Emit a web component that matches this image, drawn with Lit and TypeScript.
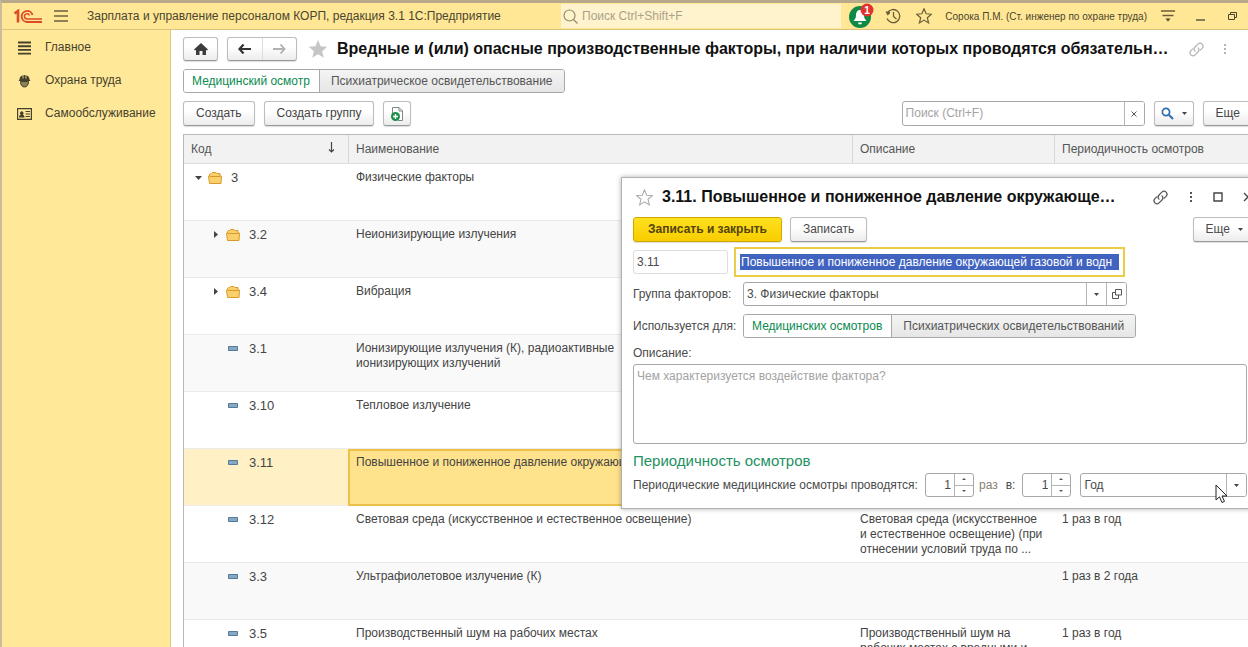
import { LitElement, html, svg, css, nothing } from "lit";
import { customElement, state } from "lit/decorators.js";
import { classMap } from "lit/directives/class-map.js";

interface Factor {
  code: string;
  name: string;
  kind: "open" | "folder" | "item";
  note?: string;
  period?: string;
}

const FACTORS: Factor[] = [
  { code: "3", name: "Физические факторы", kind: "open" },
  { code: "3.2", name: "Неионизирующие излучения", kind: "folder" },
  { code: "3.4", name: "Вибрация", kind: "folder" },
  { code: "3.1", name: "Ионизирующие излучения (К), радиоактивные\nионизирующих излучений", kind: "item" },
  { code: "3.10", name: "Тепловое излучение", kind: "item" },
  { code: "3.11", name: "Повышенное и пониженное давление окружающей", kind: "item" },
  {
    code: "3.12",
    name: "Световая среда (искусственное и естественное освещение)",
    kind: "item",
    note: "Световая среда (искусственное\nи естественное освещение) (при\nотнесении условий труда по ...",
    period: "1 раз в год",
  },
  { code: "3.3", name: "Ультрафиолетовое излучение (К)", kind: "item", period: "1 раз в 2 года" },
  {
    code: "3.5",
    name: "Производственный шум на рабочих местах",
    kind: "item",
    note: "Производственный шум на\nрабочих местах с вредными и",
    period: "1 раз в год",
  },
];

const linkIcon = svg`<svg width="17" height="17" viewBox="0 0 17 17" fill="none" stroke="currentColor" stroke-width="1.2" stroke-linecap="round">
  <path d="M7 10.2a3 3 0 0 1 0-4.2l2.9-2.9a3 3 0 0 1 4.2 0a3 3 0 0 1 0 4.2l-1.8 1.8"/>
  <path d="M10 6.8a3 3 0 0 1 0 4.2l-2.9 2.9a3 3 0 0 1-4.2 0a3 3 0 0 1 0-4.2l1.8-1.8"/></svg>`;
const dotsIcon = svg`<svg width="4" height="12" viewBox="0 0 4 12" fill="currentColor"><path d="M1 1h2v2H1zM1 5h2v2H1zM1 9h2v2H1z"/></svg>`;
const caret = svg`<svg width="5" height="3" viewBox="0 0 5 3"><path d="M0 0h5L2.5 3z" fill="#444"/></svg>`;
const starPath = "M8 .8l2.100 5 5.300.4-4.100 3.500 1.300 5.200L8 12.100l-4.600 2.800 1.300-5.200L.6 6.200l5.300-.4z";

const base = css`
  * { box-sizing: border-box; }
  button, input, select, textarea {
    font: inherit; color: inherit; margin: 0; border-radius: 0; outline: none;
  }
  svg { display: block; flex: none; }
  .btn, .tabs {
    border: 1px solid #bdbdbd; border-bottom-color: #999; border-radius: 3px;
    background: linear-gradient(#fff 40%, #ececec);
  }
  .btn {
    display: flex; align-items: center; justify-content: center; gap: 8px;
    height: 25px; padding: 0 12px; white-space: nowrap; flex: none;
    box-shadow: 0 1px 1px #ddd;
  }
  .icon { border: 0; background: none; padding: 0; display: flex; flex: none; }
  .tabs { display: flex; width: max-content; height: 24px; overflow: hidden; border-color: #a8a8a8; }
  .tabs button {
    border: 0; background: linear-gradient(#f4f4f4, #e6e6e6); padding: 0 11px; white-space: nowrap; color: #555;
  }
  .tabs button + button { border-left: 1px solid #a8a8a8; }
  .tabs .on { background: #fff; color: #0a8a50; padding: 0 9px 0 8px; }
  .box {
    display: flex; height: 24px; border: 1px solid #a8a8a8; border-radius: 3px; background: #fff; overflow: hidden;
  }
  .box input, .box select {
    border: 0; background: none; padding: 0 3px; min-width: 0; flex: 1; appearance: none;
  }
  .box .cell {
    border: 0; border-left: 1px solid #b4b4b4; background: #fff; width: 20px; padding: 0;
    display: flex; align-items: center; justify-content: center; flex: none;
  }
  ::placeholder { color: #a3a3a3; opacity: 1; }
  h1, h2 {
    font-size: 16px; line-height: 22px; font-weight: 700; color: #111;
    flex: 1; min-width: 0; white-space: nowrap;
  }
`;

@customElement("factor-dialog")
export class FactorDialog extends LitElement {
  @state() private times = 1;
  @state() private every = 1;

  static styles = [
    base,
    css`
      :host {
        display: block; background: #fff; border: 1px solid #b0b0b0;
        box-shadow: 0 0 5px rgba(0, 0, 0, 0.3); padding: 0 10px 11px 11px; color: #4a4a4a;
      }
      .head { display: flex; align-items: center; height: 38px; padding-left: 3px; }
      h2 { margin: 0 0 0 9px; }
      .tools { display: flex; align-items: center; color: #555; gap: 20px; margin: 0 -6px 0 12px; flex: none; }
      .row { display: flex; align-items: center; margin-bottom: 8px; }
      .actions { margin: 1px 0 5px; gap: 8px; }
      .primary {
        font-weight: 700; background: linear-gradient(#ffe11f, #f8cd00); border-color: #d0a800; color: #54430a;
        padding: 0 14px;
      }
      .more { margin-left: auto; margin-right: -9px; }
      .names { margin-bottom: 5px; }
      .code { width: 95px; margin-right: 6px; border-color: #ddd; }
      .name {
        border: 2px solid #eccb45; background: #fff; height: 30px; width: 391px; padding: 5px 4px; display: flex;
      }
      .name input {
        border: 0; padding: 0 0 0 1px; background: #4163c0; color: #fff; width: 100%; height: 16px;
      }
      .lab { width: 110px; white-space: nowrap; flex: none; }
      .group { width: 384px; }
      .desc { display: block; line-height: 15px; margin-bottom: 3px; }
      textarea {
        display: block; width: 100%; height: 80px; resize: none; border: 1px solid #a8a8a8; border-radius: 3px;
        padding: 4px 3px; line-height: 15px;
      }
      h3 { margin: 8px 0 3px; font-size: 15px; line-height: 18px; font-weight: 400; color: #23915f; }
      .last { margin: 0; white-space: nowrap; }
      .spin { width: 49px; flex: none; }
      .spin input { text-align: right; }
      .steps { display: flex; flex-direction: column; width: 19px; border-left: 1px solid #b4b4b4; flex: none; }
      .steps button {
        flex: 1; border: 0; padding: 0; background: none; display: flex; align-items: center; justify-content: center;
      }
      .steps button + button { border-top: 1px solid #b4b4b4; }
      .plabel { width: 292px; flex: none; }
      .times { color: #85826f; padding: 0 8px 0 5px; }
      .in { padding-right: 7px; }
      .unit { flex: 1; margin-left: 9px; }
    `,
  ];

  private spinner(id: string, value: number, set: (n: number) => void) {
    return html`<span class="box spin">
      <input id=${id} inputmode="numeric" .value=${String(value)} @change=${(e: Event) => set(Number((e.target as HTMLInputElement).value) || 1)} />
      <span class="steps">
        <button aria-label="Увеличить" @click=${() => set(value + 1)}><svg width="4" height="2" viewBox="0 0 4 2"><path d="M0 2h4L2 0z" fill="#555" /></svg></button>
        <button aria-label="Уменьшить" @click=${() => set(Math.max(1, value - 1))}><svg width="4" height="2" viewBox="0 0 4 2"><path d="M0 0h4L2 2z" fill="#555" /></svg></button>
      </span>
    </span>`;
  }

  render() {
    return html`
      <div class="head">
        <button class="icon" aria-label="В избранное">
          <svg width="17" height="17" viewBox="0 0 16 16"><path d=${starPath} fill="none" stroke="#aaa" /></svg>
        </button>
        <h2>3.11. Повышенное и пониженное давление окружающе…</h2>
        <div class="tools">
          <button class="icon" aria-label="Ссылка">${linkIcon}</button>
          <button class="icon" aria-label="Меню">${dotsIcon}</button>
          <button class="icon" aria-label="Развернуть"><svg width="10" height="10" viewBox="0 0 10 10"><path d="M1 1h8v8H1z" fill="none" stroke="#444" stroke-width="1.4" /></svg></button>
          <button class="icon" aria-label="Закрыть"><svg width="10" height="10" viewBox="0 0 10 10"><path d="M1 1l8 8M9 1l-8 8" stroke="#444" stroke-width="1.3" /></svg></button>
        </div>
      </div>
      <div class="row actions">
        <button class="btn primary">Записать и закрыть</button>
        <button class="btn">Записать</button>
        <button class="btn more">Еще ${caret}</button>
      </div>
      <div class="row names">
        <span class="box code"><input aria-label="Код" value="3.11" /></span>
        <span class="name"><input aria-label="Наименование" value="Повышенное и пониженное давление окружающей газовой и водн" /></span>
      </div>
      <div class="row">
        <label class="lab" for="group">Группа факторов:</label>
        <span class="box group">
          <input id="group" value="3. Физические факторы" />
          <button class="cell" aria-label="Выбрать">${caret}</button>
          <button class="cell" aria-label="Открыть">
            <svg width="10" height="10" viewBox="0 0 10 10" fill="none" stroke="#555"><path d="M3.5.5h6v5.5h-6zM3.5 3.5h-3v6h6V6" /></svg>
          </button>
        </span>
      </div>
      <div class="row">
        <span class="lab">Используется для:</span>
        <span class="tabs"><button class="on">Медицинских осмотров</button><button>Психиатрических освидетельствований</button></span>
      </div>
      <label class="desc" for="desc">Описание:</label>
      <textarea id="desc" placeholder="Чем характеризуется воздействие фактора?"></textarea>
      <h3>Периодичность осмотров</h3>
      <div class="row last">
        <label class="plabel" for="times">Периодические медицинские осмотры проводятся:</label>
        ${this.spinner("times", this.times, (n) => (this.times = n))}
        <span class="times">раз</span>
        <label class="in" for="every">в:</label>
        ${this.spinner("every", this.every, (n) => (this.every = n))}
        <span class="box unit">
          <select aria-label="Период"><option>Год</option></select>
          <span class="cell">${caret}</span>
        </span>
      </div>
    `;
  }
}

@customElement("app-root")
export class AppRoot extends LitElement {
  @state() private selected = "3.11";

  static styles = [
    base,
    css`
      :host {
        display: flex; flex-direction: column; height: 100vh; overflow: hidden; position: relative;
        font: 12px/15px "Liberation Sans", Arial, sans-serif; color: #444; background: #fff;
        border-top: 3px solid #b9a98c; border-left: 2px solid #c9bd9a;
      }
      header {
        display: flex; align-items: center; height: 27px; flex: none; background: #ffe795;
        border-bottom: 1px solid #d9c27c; padding: 0 9px 0 12px; color: #4a4530; white-space: nowrap;
      }
      .burger { margin: 0 19px 0 12px; }
      .app { flex: 0 0 474px; }
      .search {
        flex: 1; display: flex; align-items: center; gap: 4px; background: #fff3cd; height: 24px; padding-left: 2px;
        min-width: 0;
      }
      .search input { border: 0; background: none; padding: 0; flex: 1; min-width: 0; }
      .search ::placeholder { color: #a9a28a; }
      .sys { display: flex; align-items: center; margin-left: 8px; flex: none; }
      .bell { margin-right: 11px; }
      .badge-num { font-size: 10px; font-weight: 700; }
      .hist { margin-right: 15px; }
      .user { font-size: 10px; margin: 0 14px 0 13px; }
      .min { margin-right: 21px; }
      .body { display: flex; flex: 1; min-height: 0; }
      nav { width: 169px; flex: none; background: #ffe999; border-right: 1px solid #e3c97c; padding-top: 1px; }
      nav a {
        display: flex; align-items: center; gap: 13px; height: 33px; padding-left: 15px; color: #46412c;
        text-decoration: none;
      }
      main { flex: 1; min-width: 0; margin-right: -18px; padding: 7px 0 0 12px; display: flex; flex-direction: column; gap: 8px; }
      .title { display: flex; align-items: center; height: 24px; flex: none; }
      .title .btn { height: 24px; }
      .home { width: 35px; padding: 0; margin-right: 9px; }
      .nav { padding: 0; gap: 0; width: 70px; margin-right: 11px; }
      .nav button {
        flex: 1; height: 100%; border: 0; background: none; padding: 0; display: flex; align-items: center;
        justify-content: center;
      }
      .nav button + button { border-left: 1px solid #ddd; }
      h1 { margin: 0 10px 0 9px; }
      .pale { color: #b5b5b5; display: flex; align-items: center; gap: 18px; margin-right: 39px; flex: none; }
      .bar { display: flex; gap: 9px; flex: none; }
      .plus { width: 28px; padding: 0; }
      .find { width: 243px; height: 25px; margin-left: auto; }
      .lens { width: 40px; padding: 0; }
      .grid { border: 1px solid #b8b8b8; border-right: 0; flex: 1; min-height: 0; overflow: hidden; }
      table { border-collapse: separate; border-spacing: 0; table-layout: fixed; width: 100%; }
      .c-code { width: 164px; }
      .c-name { width: 504px; }
      .c-note { width: 202px; }
      th {
        text-align: left; font-weight: 400; height: 29px; padding: 0 7px; background: #f2f2f2; color: #555;
        border-bottom: 1px solid #ddd;
      }
      th + th { border-left: 1px solid #d8d8d8; }
      .sort { display: flex; justify-content: space-between; padding-right: 6px; }
      td {
        height: 57px; padding: 6px 7px 5px 8px; vertical-align: top; white-space: pre-line;
        border-bottom: 1px solid #ebebeb; overflow: hidden;
      }
      .clip { max-height: 45px; }
      tr:nth-child(even) td { background: #f9f9f9; }
      tr.sel td { background: #fff0c6; }
      tr.sel .main-cell { background: #ffe28c; border: 2px solid #ecc04a; padding: 4px 6px 3px; }
      .code { display: flex; align-items: center; height: 15px; gap: 6px; padding-left: 2px; font-size: 13px; }
      .code.deep { padding-left: 20px; }
      .mark { width: 8px; height: 8px; display: flex; align-items: center; justify-content: center; }
      .pic { width: 14px; margin-right: 3px; display: flex; justify-content: center; }
      factor-dialog { position: absolute; left: 619px; top: 174px; right: -10px; }
      .cursor { position: absolute; left: 1213px; top: 481px; }
    `,
  ];

  private marker(f: Factor) {
    if (f.kind === "item") return nothing;
    return f.kind === "open"
      ? html`<svg width="7" height="4" viewBox="0 0 7 4"><path d="M0 0h7L3.5 4z" fill="#444" /></svg>`
      : html`<svg width="4" height="7" viewBox="0 0 4 7"><path d="M0 0v7L4 3.5z" fill="#444" /></svg>`;
  }

  private picture(f: Factor) {
    return f.kind === "item"
      ? html`<svg width="10" height="5" viewBox="0 0 10 5"><path d="M.5.5h9v4h-9z" fill="#86a8c2" stroke="#54799a" /></svg>`
      : html`<svg width="14" height="12" viewBox="0 0 14 12"><path d="M1.500 11.500l-1-7.500h1V2.500l1-1h1l1-1H8l1 1h3V4h1.500l-.5 7.500z" fill="#fad06c" stroke="#d99a2b" /><path d="M2 4.500h10" stroke="#d99a2b" /></svg>`;
  }

  render() {
    return html`
      <header>
        <svg width="28" height="15" viewBox="0 0 28 15" fill="none" stroke="#dd4a26">
          <path d="M.5 4.500L4 2v11.500" stroke-width="2.600" />
          <path d="M18.500 6A5.500 5.500 0 1 0 13 13h15" stroke-width="1.800" />
          <path d="M15.500 6.500A2.600 2.600 0 1 0 13 10h15" stroke-width="1.500" />
        </svg>
        <button class="icon burger" aria-label="Меню">
          <svg width="14" height="12" viewBox="0 0 14 12"><path d="M0 1h14M0 6h14M0 11h14" stroke="#6b6040" stroke-width="1.3" /></svg>
        </button>
        <span class="app">Зарплата и управление персоналом КОРП, редакция 3.1 1С:Предприятие</span>
        <label class="search">
          <svg width="15" height="15" viewBox="0 0 15 15" fill="none" stroke="#958b68" stroke-width="1.2"><circle cx="6.5" cy="6.5" r="5.5" /><path d="M10.5 10.5l4 4" /></svg>
          <input type="search" placeholder="Поиск Ctrl+Shift+F" />
        </label>
        <div class="sys">
          <button class="icon bell" aria-label="Оповещения">
            <svg width="25" height="26" viewBox="0 0 25 26">
              <circle cx="11" cy="14" r="11" fill="#0e8a46" />
              <path d="M11 7c-3 0-4 2.500-4 5.500S5.500 16.500 4.500 18h13c-1-1.500-2.500-2.500-2.500-5.500S14 7 11 7zM9 19.500h4a2 2 0 0 1-4 0z" fill="#fff" />
              <circle cx="18" cy="7" r="6.500" fill="#e0332f" />
              <text class="badge-num" x="18" y="11" text-anchor="middle" fill="#fff">1</text>
            </svg>
          </button>
          <button class="icon hist" aria-label="История">
            <svg width="16" height="16" viewBox="0 0 16 16" fill="none" stroke="#695e3c" stroke-width="1.3"><path d="M2.600 4.500A6.600 6.600 0 1 1 2 10.500M8.500 4v4.500l3 2.500" /><path d="M.5 3.500h4.500v2l-2.500 2z" fill="#695e3c" stroke="none" /></svg>
          </button>
          <button class="icon" aria-label="Избранное">
            <svg width="16" height="16" viewBox="0 0 16 16"><path d=${starPath} fill="none" stroke="#695e3c" stroke-width="1.2" /></svg>
          </button>
          <span class="user">Сорока П.М. (Ст. инженер по охране труда)</span>
          <button class="icon min" aria-label="Настройки">
            <svg width="14" height="12" viewBox="0 0 14 12"><path d="M0 1h14M1.500 5.500h11" stroke="#695e3c" stroke-width="1.300" /><path d="M4.500 8.500h5L7 11.500z" fill="#4a4530" /></svg>
          </button>
          <button class="icon min" aria-label="Свернуть">
            <svg width="10" height="10" viewBox="0 0 10 10"><path d="M0 9h9" stroke="#4a4530" stroke-width="1.300" /></svg>
          </button>
          <button class="icon" aria-label="Восстановить">
            <svg width="12" height="10" viewBox="0 0 12 10" fill="none" stroke="#4a4530"><path d="M1.500 3.500h6v5h-6zM3.500 3.500v-2h6v5h-2" /></svg>
          </button>
        </div>
      </header>
      <div class="body">
        <nav>
          <a href="#main">
            <svg width="15" height="14" viewBox="0 0 15 14"><path d="M1 1.500h13M1 5.200h13M1 8.900h13M1 12.600h13" stroke="#46412c" stroke-width="1.900" /></svg>Главное
          </a>
          <a href="#safety">
            <svg width="15" height="14" viewBox="0 0 15 14"><path d="M2.500 5.500C2.500 2.500 4.500 1 7.500 1s5 1.500 5 4.500l1 1.500h-12z" fill="#46412c" /><path d="M6 1v3.500M9 1v3.500" stroke="#ffe999" stroke-width=".8" /><path d="M3.500 7.500c0 3.500 1.500 5.500 4 5.500s4-2 4-5.500z" fill="#8a8159" stroke="#46412c" /></svg>Охрана труда
          </a>
          <a href="#self">
            <svg width="15" height="12" viewBox="0 0 15 12"><path d="M.6.6h13.800v10.800H.6z" fill="none" stroke="#46412c" stroke-width="1.200" /><path d="M2 9.500c0-2 .8-2.500 1.800-2.800a1.800 1.800 0 1 1 1.900 0c1 .3 1.800.8 1.800 2.800z" fill="#46412c" /><path d="M8.500 3.500H13M8.500 6H13M8.500 8.500H13" stroke="#46412c" /></svg>Самообслуживание
          </a>
        </nav>
        <main>
          <div class="title">
            <button class="btn home" aria-label="Домой">
              <svg width="14" height="12" viewBox="0 0 14 12"><path d="M7 0l7 6.500-1 1L12 6.700V12H8.500V8h-3v4H2V6.700l-1 .8-1-1z" fill="#3c3c3c" /></svg>
            </button>
            <span class="btn nav">
              <button aria-label="Назад"><svg width="13" height="10" viewBox="0 0 13 10"><path d="M5.500.5L1.500 5l4 4.500M2 5h11" fill="none" stroke="#333" stroke-width="2.200" /></svg></button>
              <button aria-label="Вперед"><svg width="13" height="10" viewBox="0 0 13 10"><path d="M7.500.5l4 4.500-4 4.500M11 5H0" fill="none" stroke="#b0b0b0" stroke-width="1.800" /></svg></button>
            </span>
            <button class="icon" aria-label="В избранное"><svg width="20" height="20" viewBox="0 0 16 16"><path d=${starPath} fill="#c6c6c6" /></svg></button>
            <h1>Вредные и (или) опасные производственные факторы, при наличии которых проводятся обязательн…</h1>
            <div class="pale">
              <button class="icon" aria-label="Ссылка">${linkIcon}</button>
              <button class="icon" aria-label="Меню">${dotsIcon}</button>
            </div>
          </div>
          <div class="tabs"><button class="on">Медицинский осмотр</button><button>Психиатрическое освидетельствование</button></div>
          <div class="bar">
            <button class="btn">Создать</button>
            <button class="btn">Создать группу</button>
            <button class="btn plus" aria-label="Создать копированием">
              <svg width="14" height="16" viewBox="0 0 14 16"><path d="M2.500 8V1.500h6.500l3.500 3.500v9.500H8" fill="#fff" stroke="#7c8a86" /><path d="M9 1.500V5h3.500" fill="none" stroke="#7c8a86" /><circle cx="5.500" cy="10.500" r="4.500" fill="#1b8f4a" /><path d="M3 10.500h5M5.500 8v5" stroke="#fff" stroke-width="1.400" /></svg>
            </button>
            <span class="box find">
              <input aria-label="Поиск" placeholder="Поиск (Ctrl+F)" />
              <button class="cell" aria-label="Очистить"><svg width="6" height="6" viewBox="0 0 6 6"><path d="M.5.5l5 5M5.500.5l-5 5" stroke="#555" /></svg></button>
            </span>
            <button class="btn lens" aria-label="Найти">
              <svg width="13" height="13" viewBox="0 0 13 13" fill="none" stroke="#2f6fae"><circle cx="5" cy="5" r="3.600" stroke-width="1.700" /><path d="M8 8l4 4" stroke-width="2.200" /></svg>${caret}
            </button>
            <button class="btn">Еще ${caret}</button>
          </div>
          <div class="grid">
            <table>
              <colgroup><col class="c-code" /><col class="c-name" /><col class="c-note" /><col /></colgroup>
              <thead>
                <tr>
                  <th><span class="sort">Код <svg width="7" height="11" viewBox="0 0 7 11"><path d="M3.500 0v10M1 7.500l2.500 2.500L6 7.500" fill="none" stroke="#444" stroke-width="1.200" /></svg></span></th>
                  <th>Наименование</th>
                  <th>Описание</th>
                  <th>Периодичность осмотров</th>
                </tr>
              </thead>
              <tbody>
                ${FACTORS.map(
                  (f) => html`<tr class=${classMap({ sel: f.code === this.selected })} @click=${() => (this.selected = f.code)}>
                    <td><div class=${classMap({ code: true, deep: f.kind !== "open" })}><span class="mark">${this.marker(f)}</span><span class="pic">${this.picture(f)}</span>${f.code}</div></td>
                    <td class="main-cell"><div class="clip">${f.name}</div></td>
                    <td><div class="clip">${f.note ?? nothing}</div></td>
                    <td>${f.period ?? nothing}</td>
                  </tr>`
                )}
              </tbody>
            </table>
          </div>
        </main>
      </div>
      <factor-dialog role="dialog" aria-label="Карточка фактора"></factor-dialog>
      <svg class="cursor" width="13" height="20" viewBox="0 0 13 20"><path d="M1 1v15l3.500-3.200L7 18.500l2.500-1.100L7 12h5z" fill="#fff" stroke="#222" /></svg>
    `;
  }
}
